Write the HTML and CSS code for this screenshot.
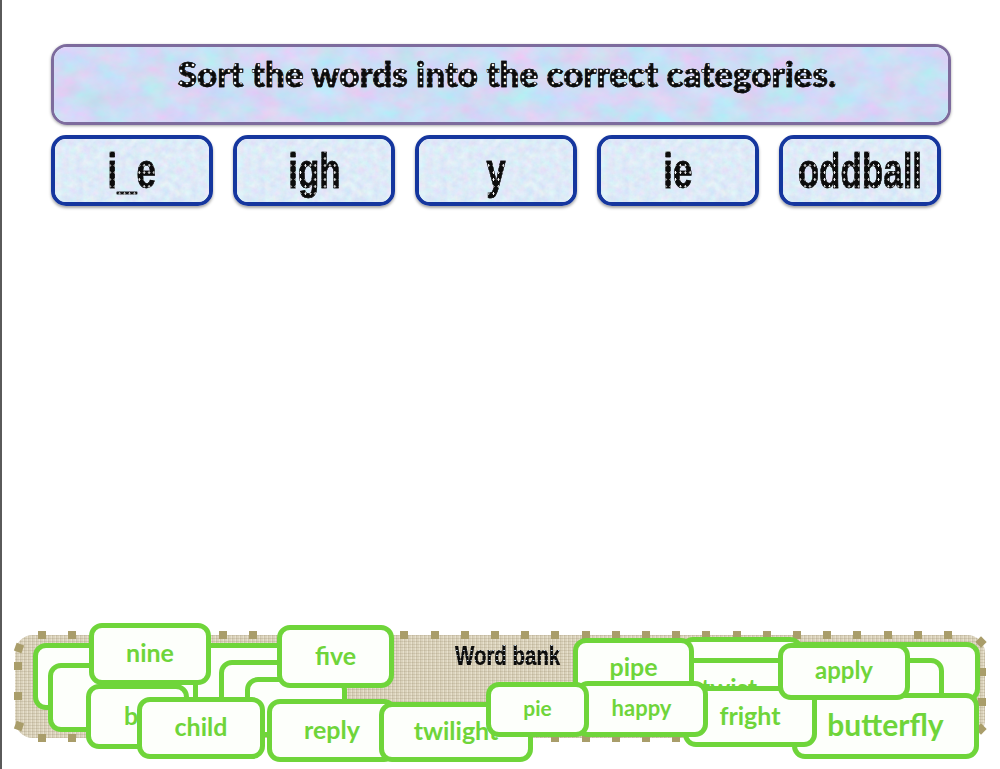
FILE: index.html
```html
<!DOCTYPE html>
<html lang="en">
<head>
<meta charset="utf-8">
<title>Sort the words</title>
<link rel="stylesheet" href="styles.css">
</head>
<body>
<svg class="defs" width="0" height="0" aria-hidden="true">
  <filter id="mottle" x="0" y="0" width="100%" height="100%" color-interpolation-filters="sRGB">
    <feTurbulence type="fractalNoise" baseFrequency="0.035 0.05" numOctaves="5" seed="7"/>
    <feColorMatrix values="0.3 0 0 0 0.66  -0.16 0.1 0 0 0.89  0 0 0.08 0 0.92  0 0 0 0 1"/>
  </filter>
  <filter id="paper" x="0" y="0" width="100%" height="100%" color-interpolation-filters="sRGB">
    <feTurbulence type="fractalNoise" baseFrequency="0.14" numOctaves="4" seed="3"/>
    <feColorMatrix values="0.14 0 0 0 0.8  0 0.12 0 0 0.86  0 0 0.06 0 0.94  0 0 0 0 1"/>
  </filter>
</svg>
<main class="page">
  <h1 class="prompt"><span class="dotted">Sort the words into the correct categories.</span></h1>
  <section class="cats">
    <div class="cat"><span class="dotted tall">i_e</span></div>
    <div class="cat"><span class="dotted tall">igh</span></div>
    <div class="cat"><span class="dotted tall">y</span></div>
    <div class="cat"><span class="dotted tall">ie</span></div>
    <div class="cat"><span class="dotted tall">oddball</span></div>
  </section>
  <section class="bank">
    <i class="stitch top"></i><i class="stitch bottom"></i><i class="stitch left"></i><i class="stitch right"></i>
    <i class="knot k1"></i><i class="knot k2"></i><i class="knot k3"></i><i class="knot k4"></i>
    <h2 class="bank-title"><span class="dotted">Word bank</span></h2>
  </section>
  <div class="tile w-a"></div>
  <div class="tile w-b"></div>
  <div class="tile w-c"></div>
  <div class="tile w-d">tie</div>
  <div class="tile w-by">by</div>
  <div class="tile w-nine">nine</div>
  <div class="tile w-five">five</div>
  <div class="tile w-e"></div>
  <div class="tile w-f"></div>
  <div class="tile w-twist">twist</div>
  <div class="tile w-pipe">pipe</div>
  <div class="tile w-butterfly">butterfly</div>
  <div class="tile w-fright">fright</div>
  <div class="tile w-child">child</div>
  <div class="tile w-reply">reply</div>
  <div class="tile w-twilight">twilight</div>
  <div class="tile w-happy">happy</div>
  <div class="tile w-pie">pie</div>
  <div class="tile w-apply">apply</div>
</main>
</body>
</html>
```

FILE: styles.css
```css
* { box-sizing: border-box; }
html, body { margin: 0; height: 100%; overflow: hidden; background: #fff; }
.defs { position: absolute; }

.page {
  position: relative;
  display: flex;
  flex-direction: column;
  height: 769px;
  padding: 44px 0 31px 51px;
  box-shadow: inset 2px 0 0 #5a5a5a;
  overflow: hidden;
}

.dotted {
  display: inline-block;
  -webkit-text-fill-color: transparent;
  -webkit-text-stroke: .5px #0c0c0c;
  background-color: #0c0c0c;
  background-image: radial-gradient(circle at center, #fafafa 0, #fafafa 1.1px, transparent 1.7px);
  background-size: 6px 6px;
  -webkit-background-clip: text;
  background-clip: text;
}

.prompt {
  position: relative;
  display: flex;
  align-items: center;
  justify-content: center;
  width: 900px;
  height: 81px;
  margin: 0;
  padding: 0 0 23px 12px;
  border: 3px solid #7d6b9d;
  border-radius: 16px;
  box-shadow: 0 1px 3px rgba(0,0,0,.35);
  overflow: hidden;
  font: 900 35px/46px Lato, "Open Sans", sans-serif;
  isolation: isolate;
}
.prompt::before, .cat::before {
  content: "";
  position: absolute;
  inset: 0;
  z-index: -1;
}
.prompt::before { filter: url(#mottle); }

.cats { display: flex; gap: 20px; margin-top: 10px; }
.cat {
  position: relative;
  display: flex;
  align-items: center;
  justify-content: center;
  width: 162px;
  height: 71px;
  border: 4px solid #15369e;
  border-radius: 15px;
  box-shadow: 0 2px 3px rgba(0,0,0,.35);
  overflow: hidden;
  isolation: isolate;
}
.cat::before { filter: url(#paper); }
.tall {
  flex: none;
  font: 700 50px/60px "Liberation Sans", sans-serif;
  background-size: 7px 7px;
  transform: scaleX(.7);
}

.bank {
  position: relative;
  margin: auto 0 0 -36px;
  width: 970px;
  height: 103px;
  border-radius: 18px;
  background-color: #dbd3bd;
  background-image:
    repeating-linear-gradient(0deg, rgba(135,120,85,.18) 0 1px, transparent 1px 3px),
    repeating-linear-gradient(90deg, rgba(255,250,235,.35) 0 1px, rgba(135,120,85,.14) 1px 2px, transparent 2px 4px);
}
.bank-title {
  margin: 0;
  padding: 3px 0 0 440px;
  font: 700 28px/36px "Liberation Sans", sans-serif;
}
.bank-title .dotted {
  -webkit-text-stroke-width: .2px;
  background-size: 5px 5px;
  background-image: radial-gradient(circle at center, #cfe0f0 0, #cfe0f0 .7px, transparent 1.1px);
  transform: scaleX(.73);
  transform-origin: left center;
}

.stitch { position: absolute; display: block; }
.stitch.top, .stitch.bottom {
  left: 23px;
  right: 28px;
  height: 8px;
  background: repeating-linear-gradient(90deg, #a99d6a 0 8px, transparent 8px 30.2px);
}
.stitch.top { top: -4px; }
.stitch.bottom { bottom: -4px; }
.stitch.left, .stitch.right {
  top: 27px;
  width: 8px;
  height: 40px;
  background: repeating-linear-gradient(180deg, #a99d6a 0 8px, transparent 8px 30.4px);
}
.stitch.left { left: -1px; }
.stitch.right { left: 963px; top: 33px; }
.knot { position: absolute; display: block; width: 8px; height: 8px; background: #a99d6a; transform: rotate(20deg); }
.k1 { left: 0; top: 9px; }
.k2 { left: 962px; top: 3px; transform: rotate(45deg); }
.k3 { left: 0; top: 87px; }
.k4 { left: 962px; top: 90px; transform: rotate(45deg); }

.tile {
  position: absolute;
  display: flex;
  align-items: center;
  justify-content: center;
  padding-bottom: 4px;
  border: 5px solid #6fd53a;
  border-radius: 13px;
  background: #fdfffb;
  color: #6fd53a;
  font: 700 25px/30px Lato, "Open Sans", sans-serif;
}
.w-a { left: 33px; top: 643px; width: 260px; height: 67px; }
.w-b { left: 48px; top: 663px; width: 150px; height: 69px; }
.w-c { left: 219px; top: 660px; width: 100px; height: 66px; }
.w-d { left: 245px; top: 677px; width: 102px; height: 60px; padding: 6px 0 0; }
.w-by { left: 86px; top: 684px; width: 103px; height: 65px; }
.w-nine { left: 89px; top: 623px; width: 122px; height: 62px; }
.w-five { left: 277px; top: 625px; width: 117px; height: 63px; }
.w-e { left: 790px; top: 642px; width: 190px; height: 60px; }
.w-f { left: 680px; top: 637px; width: 123px; height: 60px; }
.w-twist { left: 640px; top: 658px; width: 304px; height: 64px; justify-content: flex-start; padding: 0 0 6px 56px; }
.w-pipe { left: 573px; top: 638px; width: 121px; height: 58px; padding-bottom: 2px; }
.w-butterfly { left: 792px; top: 693px; width: 187px; height: 66px; font-size: 30px; }
.w-fright { left: 683px; top: 686px; width: 134px; height: 61px; }
.w-child { left: 137px; top: 697px; width: 128px; height: 62px; }
.w-reply { left: 267px; top: 699px; width: 130px; height: 63px; }
.w-twilight { left: 379px; top: 702px; width: 154px; height: 60px; }
.w-happy { left: 575px; top: 681px; width: 133px; height: 56px; font-size: 22px; padding-bottom: 3px; }
.w-pie { left: 486px; top: 682px; width: 103px; height: 55px; font-size: 21px; padding-bottom: 3px; }
.w-apply { left: 778px; top: 643px; width: 132px; height: 57px; font-size: 24px; }
```
